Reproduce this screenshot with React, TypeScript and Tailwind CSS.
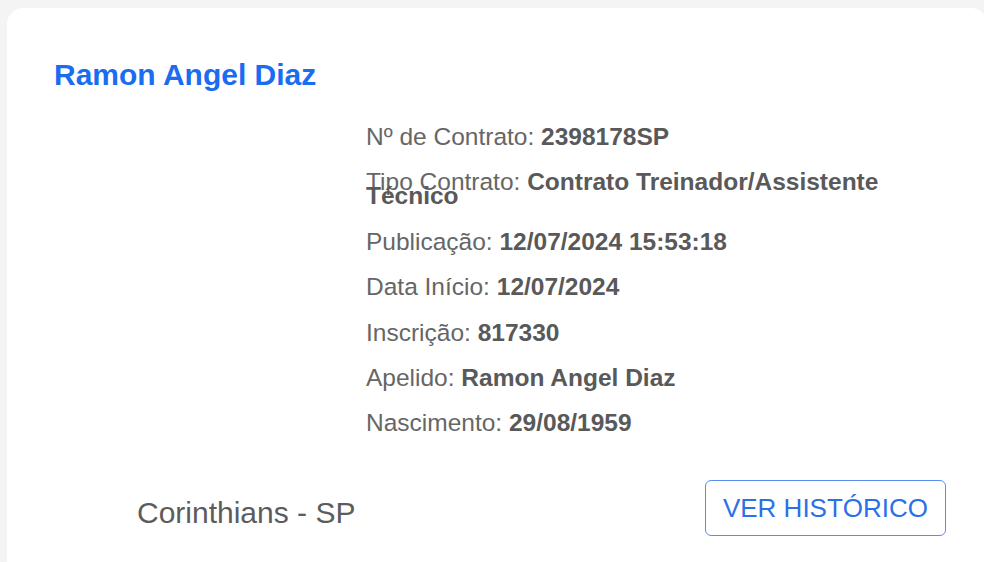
import React from "react";

const rows: { label: string; value: string }[] = [
  { label: "Nº de Contrato:", value: "2398178SP" },
  { label: "Tipo Contrato:", value: "Contrato Treinador/Assistente Técnico" },
  { label: "Publicação:", value: "12/07/2024 15:53:18" },
  { label: "Data Início:", value: "12/07/2024" },
  { label: "Inscrição:", value: "817330" },
  { label: "Apelido:", value: "Ramon Angel Diaz" },
  { label: "Nascimento:", value: "29/08/1959" },
];

export default function App() {
  return (
    <div
      className="min-h-screen w-full overflow-hidden bg-[#f4f4f4] pt-[8px] pl-[7px]"
      style={{ fontFamily: '"Liberation Sans", Arial, sans-serif' }}
    >
      <div className="w-[980px] rounded-[16px] bg-white pt-[50px] pl-[47px] pb-[40px]">
        <h2 className="text-[30px] leading-[34px] font-bold text-[#1a6df0]">
          Ramon Angel Diaz
        </h2>
        <div className="mt-[38px] ml-[312px] w-[540px] flex flex-col gap-[31.4px]">
          {rows.map((r) => (
            <p key={r.label} className="text-[24.5px] leading-[14px] text-[#666666]">
              {r.label} <span className="font-bold text-[#595959]">{r.value}</span>
            </p>
          ))}
        </div>
        <div className="mt-[50px] flex items-center justify-between pl-[83px] pr-[41px]">
          <span className="pt-[10px] text-[30px] leading-[32px] text-[#5c5c5c]">
            Corinthians - SP
          </span>
          <button className="flex h-[56px] w-[241px] items-center justify-center rounded-[6px] border border-[#5a8ff0] bg-white text-[26px] leading-[30px] text-[#2d6fe8]">
            VER HISTÓRICO
          </button>
        </div>
      </div>
    </div>
  );
}
